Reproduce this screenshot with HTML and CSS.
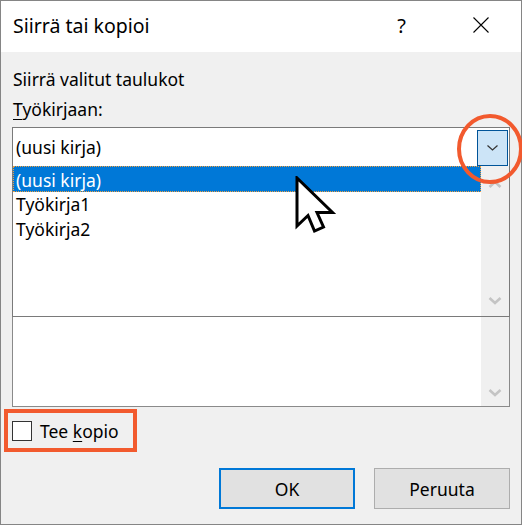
FILE: index.html
```html
<!DOCTYPE html>
<html lang="fi">
<head>
<meta charset="utf-8">
<title>Siirrä tai kopioi</title>
<link rel="stylesheet" href="styles.css">
</head>
<body>
<div class="window">
  <div class="titlebar">
    <span class="title">Siirrä tai kopioi</span>
    <span class="help">?</span>
    <svg class="close" width="16" height="16" viewBox="0 0 16 16">
      <path d="M0.5 0.5 L15.5 15.5 M15.5 0.5 L0.5 15.5" stroke="#000" stroke-width="1.1" fill="none"/>
    </svg>
  </div>
  <div class="content">
    <div class="label">Siirrä valitut taulukot</div>
    <div class="label"><u>T</u>yökirjaan:</div>
    <div class="combo">
      <div class="field">
        <span class="field-text">(uusi kirja)</span>
        <span class="drop">
          <svg width="11" height="6" viewBox="0 0 11 6"><path d="M0.5 0.5 L5.5 5 L10.5 0.5" stroke="#333" stroke-width="1.2" fill="none"/></svg>
        </span>
      </div>
      <div class="list">
        <div class="items">
          <div class="item selected">(uusi kirja)</div>
          <div class="item">Työkirja1</div>
          <div class="item">Työkirja2</div>
        </div>
        <div class="scroll">
          <svg class="chev" width="14" height="8" viewBox="0 0 14 8"><path d="M1.5 7 L7 2 L12.5 7" stroke="#c4c4c4" stroke-width="2.6" fill="none"/></svg>
          <svg class="chev" width="14" height="8" viewBox="0 0 14 8"><path d="M1.5 1 L7 6 L12.5 1" stroke="#c4c4c4" stroke-width="2.6" fill="none"/></svg>
        </div>
      </div>
      <div class="list lower">
        <div class="items"></div>
        <div class="scroll end">
          <svg class="chev" width="14" height="8" viewBox="0 0 14 8"><path d="M1.5 1 L7 6 L12.5 1" stroke="#c4c4c4" stroke-width="2.6" fill="none"/></svg>
        </div>
      </div>
      <svg class="ring" width="70" height="76" viewBox="0 0 70 76">
        <ellipse cx="35" cy="38" rx="31" ry="33" stroke="#f25a2e" stroke-width="4" fill="none"/>
      </svg>
      <svg class="pointer" width="44" height="58" viewBox="0 0 44 58">
        <path d="M2 2 L2 50 L13 39.5 L19.5 55 L28.5 51 L22 36.5 L37.5 36.5 Z" fill="#fff" stroke="#000" stroke-width="3" stroke-linejoin="miter"/>
      </svg>
    </div>
    <div class="copy-row">
      <span class="box"></span>
      <span class="copy-label">Tee <u>k</u>opio</span>
    </div>
    <div class="buttons">
      <button class="btn default">OK</button>
      <button class="btn">Peruuta</button>
    </div>
  </div>
</div>
</body>
</html>
```
FILE: styles.css
```css
* { box-sizing: border-box; }

html, body {
  margin: 0;
  padding: 0;
  background: #f0f0f0;
}

body {
  font-family: "Noto Sans", "Open Sans", sans-serif;
  color: #000;
}

.window {
  width: 522px;
  height: 525px;
  border: 1px solid #858585;
  display: flex;
  flex-direction: column;
  background: #f0f0f0;
}

.titlebar {
  height: 51px;
  background: #fff;
  display: flex;
  align-items: center;
  padding-left: 12px;
  flex: none;
}

.title {
  font-size: 19.5px;
  flex: 1;
  margin-top: -2px;
}

.help {
  font-size: 20px;
  margin-right: 67px;
  margin-top: -2px;
}

.close {
  margin-right: 32px;
  margin-top: -3px;
}

.content {
  flex: 1;
  padding: 12px 11px 0 11px;
  display: flex;
  flex-direction: column;
}

.label {
  font-size: 17.5px;
  line-height: 30px;
  padding-left: 1px;
}

.label u {
  text-underline-offset: 3px;
}

.combo {
  position: relative;
  margin-top: 3px;
  width: 498px;
}

.field {
  height: 39px;
  background: #fff;
  border: 1px solid #7a7a7a;
  border-bottom: none;
  display: flex;
  align-items: center;
  padding-left: 3px;
}

.field-text {
  flex: 1;
  font-size: 17.5px;
  line-height: 37px;
}

.drop {
  width: 31px;
  height: 36px;
  margin-right: 1px;
  margin-top: 1px;
  background: #cce4f7;
  border: 1px solid #005499;
  display: flex;
  align-items: center;
  justify-content: center;
}

.list {
  height: 151px;
  display: flex;
  border: 1px solid #7a7a7a;
  border-top: none;
  background: #fff;
}

.list.lower {
  height: 90px;
  border-color: #8a8a8a;
}

.items {
  flex: 1;
  display: flex;
  flex-direction: column;
}

.item {
  height: 25px;
  font-size: 17.5px;
  line-height: 25px;
  padding-left: 3px;
}

.item.selected {
  height: 26px;
  background: #0078d7;
  color: #fff;
  border: 1px dotted #f0a040;
  padding-left: 2px;
  line-height: 26px;
}

.scroll {
  width: 28px;
  background: #f0f0f0;
  display: flex;
  flex-direction: column;
  justify-content: space-between;
  align-items: center;
  padding: 14px 0 11px;
}

.scroll.end {
  justify-content: flex-end;
  padding-bottom: 9px;
}

.ring {
  position: absolute;
  left: 443px;
  top: -16px;
}

.pointer {
  position: absolute;
  left: 283px;
  top: 49px;
}

.copy-row {
  margin: 2px 0 0 -8px;
  width: 133px;
  height: 43px;
  border: 4px solid #f25a2e;
  display: flex;
  align-items: center;
  padding-left: 4px;
}

.box {
  width: 20px;
  height: 20px;
  border: 1px solid #333;
  background: #fff;
  flex: none;
}

.copy-label {
  font-size: 17.5px;
  margin-left: 8px;
}

.copy-label u {
  text-underline-offset: 3px;
}

.buttons {
  display: flex;
  justify-content: flex-end;
  gap: 19px;
  margin-top: 16px;
  padding-right: 0;
}

.btn {
  font-family: "Noto Sans", "Open Sans", sans-serif;
  font-size: 17.5px;
  color: #000;
  height: 41px;
  width: 136px;
  background: #e1e1e1;
  border: 1px solid #adadad;
  padding: 0;
}

.btn.default {
  border: 2px solid #0078d7;
}
```
